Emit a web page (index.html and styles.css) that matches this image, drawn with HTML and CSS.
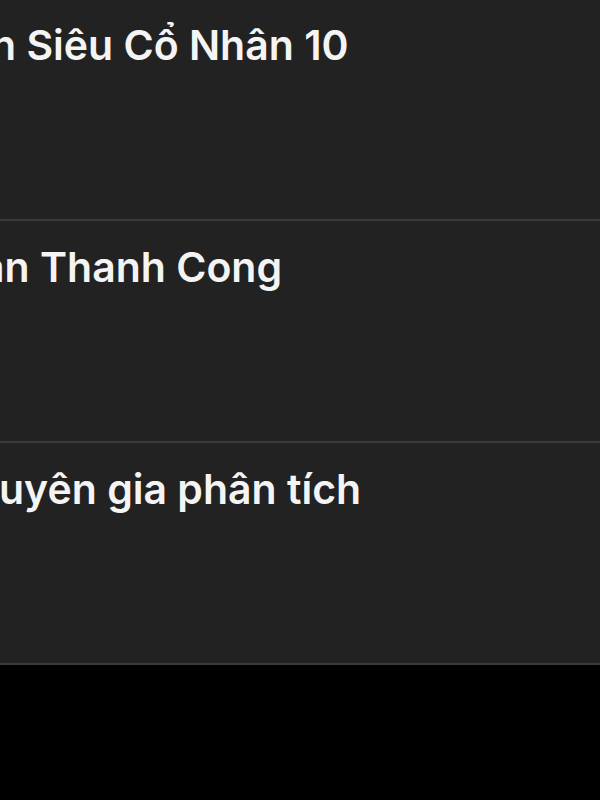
FILE: index.html
```html
<!DOCTYPE html>
<html lang="vi">
<head>
    <meta charset="UTF-8">
    <meta name="viewport" content="width=device-width, initial-scale=1.0">
    <title>Danh sách</title>
    <link rel="stylesheet" href="styles.css">
</head>
<body>
    <div class="list">
        <div class="row first">
            <div class="title t1">n Siêu Cổ Nhân 10</div>
        </div>
        <div class="row">
            <div class="title t2">an Thanh Cong</div>
        </div>
        <div class="row">
            <div class="title t3">uyên gia phân tích</div>
        </div>
    </div>
</body>
</html>
```

FILE: styles.css
```css
body {
    margin: 0;
    padding: 0;
    background: #000;
    font-family: 'Inter', 'Noto Sans', sans-serif;
    color: #f4f4f4;
    overflow: hidden;
}
.list {
    background: #222222;
}
.row {
    height: 222px;
    box-sizing: border-box;
    padding-top: 22px;
    border-bottom: 2px solid #3a3a3a;
    overflow: hidden;
}
.row.first {
    height: 221px;
    padding-top: 21px;
}
.title {
    font-size: 41px;
    line-height: 48px;
    font-weight: 600;
    white-space: nowrap;
}
.t1 {
    margin-left: -9px;
}
.t2 {
    margin-left: -19px;
}
.t3 {
    margin-left: -1px;
}
```
